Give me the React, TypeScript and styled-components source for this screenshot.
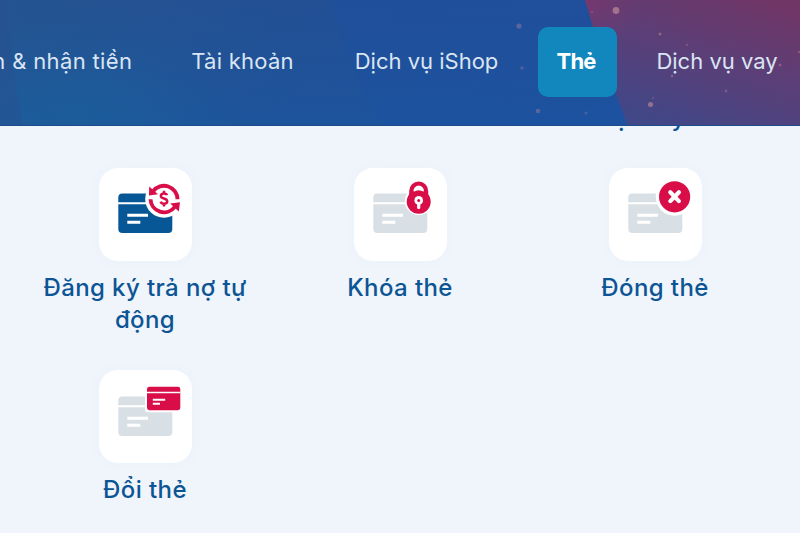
import styled, {createGlobalStyle} from 'styled-components'

const GlobalStyle = createGlobalStyle`
    * {
        box-sizing: border-box;
    }

    body {
        margin: 0;
        background-color: #f0f4fb;
        font-family: Inter, "Open Sans", sans-serif;
        overflow: hidden;
    }
`

const Page = styled.div`
    width: 800px;
    height: 533px;
    overflow: hidden;
    display: flex;
    flex-direction: column;
`

const Header = styled.header`
    position: relative;
    z-index: 1;
    flex: none;
    height: 126px;
    padding-top: 27px;
    overflow: hidden;
    border-bottom: 1px solid #1d4b89;
    background-color: #20529a;
`

const Backdrop = styled.svg`
    position: absolute;
    top: 0;
    left: 0;
    width: 800px;
    height: 126px;
`

const Tabs = styled.nav`
    position: relative;
    display: flex;
    justify-content: flex-end;
    gap: 20px;
    width: 797px;
`

interface TabProps {
    $width: number;
    $spacing?: number;
    $active?: boolean;
}

const Tab = styled.a<TabProps>`
    flex: none;
    display: flex;
    align-items: center;
    justify-content: center;
    width: ${props => props.$width}px;
    height: 70px;
    padding-bottom: 2px;
    padding-right: ${props => props.$active ? 3 : 0}px;
    border-radius: 10px;
    font-size: 22px;
    font-weight: ${props => props.$active ? 700 : 400};
    letter-spacing: ${props => props.$spacing || 0}px;
    white-space: nowrap;
    color: ${props => props.$active ? '#ffffff' : '#dbe5f3'};
    background-color: ${props => props.$active ? '#1287be' : 'transparent'};
`

const Content = styled.main`
    display: flex;
    flex-direction: column;
    gap: 34px;
    margin-top: -24px;
    padding: 0 17px;
`

const Row = styled.section`
    display: grid;
    grid-template-columns: repeat(3, 255px);
    justify-content: center;
`

const Item = styled.div`
    display: flex;
    flex-direction: column;
    align-items: center;
    gap: 11px;
`

const LastItem = styled(Item)`
    grid-column: 3;
`

const Tile = styled.div`
    width: 93px;
    height: 93px;
    border-radius: 19px;
    background-color: #ffffff;
    box-shadow: 0 0 8px rgba(232, 243, 253, 0.6);

    svg {
        display: block;
    }
`

const Label = styled.p<{ $spacing?: number }>`
    margin: 0;
    max-width: 220px;
    font-size: 24px;
    font-weight: 500;
    line-height: 32px;
    letter-spacing: ${props => props.$spacing ?? 0.4}px;
    text-align: center;
    color: #0c5595;
`

const RED = '#d90d48'
const BLUE = '#075796'
const GREY = '#d8e0e6'

const specks = [
    {x: 616, y: 10.5, r: 3.4, o: 0.65},
    {x: 519, y: 26, r: 2.6, o: 0.35},
    {x: 660, y: 34, r: 1.5, o: 0.45},
    {x: 687, y: 45, r: 1.3, o: 0.25},
    {x: 592, y: 12, r: 1.3, o: 0.2},
    {x: 522, y: 68, r: 1.8, o: 0.28},
    {x: 780, y: 65, r: 1.5, o: 0.4},
    {x: 672, y: 76, r: 1.3, o: 0.45},
    {x: 726, y: 91, r: 1.4, o: 0.35},
    {x: 650.5, y: 104.5, r: 2.5, o: 0.6},
    {x: 653, y: 98, r: 1.2, o: 0.25},
    {x: 538, y: 111, r: 2.3, o: 0.35},
    {x: 586, y: 113, r: 1.5, o: 0.25},
    {x: 799, y: 52, r: 1.2, o: 0.4},
]

function HeaderArt() {
    return (
        <Backdrop viewBox="0 0 800 126">
            <defs>
                <linearGradient id="base" x1="0" y1="0" x2="1" y2="0">
                    <stop offset="0" stopColor="#235792"/>
                    <stop offset="0.35" stopColor="#205197"/>
                    <stop offset="0.75" stopColor="#1f509c"/>
                </linearGradient>
                <linearGradient id="glow" x1="0" y1="0" x2="0" y2="1">
                    <stop offset="0" stopColor="#2a4c8e" stopOpacity="0.3"/>
                    <stop offset="1" stopColor="#1759a2" stopOpacity="0.4"/>
                </linearGradient>
                <radialGradient id="teal">
                    <stop offset="0" stopColor="#1a629e" stopOpacity="0.5"/>
                    <stop offset="1" stopColor="#1a629e" stopOpacity="0"/>
                </radialGradient>
                <linearGradient id="purple" gradientUnits="userSpaceOnUse" x1="740" y1="-10" x2="690" y2="135">
                    <stop offset="0" stopColor="#703666"/>
                    <stop offset="0.5" stopColor="#5a3f78"/>
                    <stop offset="1" stopColor="#414787"/>
                </linearGradient>
                <radialGradient id="pink" gradientUnits="userSpaceOnUse" cx="585" cy="0" r="55">
                    <stop offset="0" stopColor="#8c3469" stopOpacity="0.5"/>
                    <stop offset="1" stopColor="#8c3469" stopOpacity="0"/>
                </radialGradient>
            </defs>
            <rect width="800" height="126" fill="url(#base)"/>
            <rect width="800" height="126" fill="url(#glow)"/>
            <ellipse cx="80" cy="120" rx="160" ry="100" fill="url(#teal)"/>
            <path d="M0 0H6Q12 70 22 126H0Z" fill="#2a5090" opacity="0.45"/>
            <path d="M330 0H585L628 126H382Q350 70 330 0Z" fill="#1d50a4" opacity="0.35"/>
            <path d="M585 0H800V126H628Q602 60 585 0Z" fill="url(#purple)"/>
            <path d="M585 0H800V126H628Q602 60 585 0Z" fill="url(#pink)"/>
            {specks.map(s => (
                <circle key={`${s.x}-${s.y}`} cx={s.x} cy={s.y} r={s.r} fill="#c58f9b" opacity={s.o}/>
            ))}
        </Backdrop>
    )
}

function CardShape({color}: { color: string }) {
    return (
        <g>
            <rect x="19.3" y="25.5" width="54" height="39.6" rx="4" fill={color}/>
            <path d="M19 35.3H74" stroke="#fff" strokeWidth="2"/>
            <path d="M28.3 47.3H49M28.3 54.2H41.3" stroke="#fff" strokeWidth="3"/>
        </g>
    )
}

function AutoPayIcon() {
    return (
        <svg width="93" height="93" viewBox="0 0 93 93">
            <CardShape color={BLUE}/>
            <circle cx="65" cy="31" r="18.8" fill="#fff"/>
            <g fill="none" stroke={RED} strokeWidth="3.9">
                <path d="M54.2 23.2A13.5 13.5 0 0 1 78.5 31.3"/>
                <path d="M75.8 38.8A13.5 13.5 0 0 1 51.5 31.2"/>
            </g>
            <path d="M50.2 18.4L50 27.4L59 26.2Z" fill={RED}/>
            <path d="M79.8 43.6L81 34.2L71.2 35.6Z" fill={RED}/>
            <path
                d="M68 27.2C67.6 25.9 66.4 25.4 65 25.4C63.1 25.4 61.9 26.4 61.9 27.9C61.9 31.2 68.2 29.7 68.2 33.2C68.2 34.8 66.9 35.7 65 35.7C63.4 35.7 62.1 35 61.7 33.6M65 22.8V25.4M65 35.7V38.6"
                fill="none" stroke={RED} strokeWidth="2.5"/>
        </svg>
    )
}

function LockIcon() {
    return (
        <svg width="93" height="93" viewBox="0 0 93 93">
            <CardShape color={GREY}/>
            <circle cx="64.7" cy="33.3" r="13.8" fill="#fff"/>
            <circle cx="64.7" cy="22.9" r="10.8" fill="#fff"/>
            <path d="M57.3 28V22.9A7.4 7.4 0 0 1 72.1 22.9V28" fill="none" stroke={RED} strokeWidth="4.2"/>
            <circle cx="64.7" cy="33.8" r="12" fill={RED}/>
            <path d="M59.7 23.8A5.1 5.1 0 0 1 69.7 23.8Q64.7 20.8 59.7 23.8Z" fill="#fff"/>
            <circle cx="64.7" cy="32.4" r="4.3" fill="#fff"/>
            <path d="M64.7 34V39.4" stroke="#fff" strokeWidth="3.2" strokeLinecap="round"/>
            <circle cx="64.7" cy="32.4" r="1.5" fill={RED}/>
        </svg>
    )
}

function CloseCardIcon() {
    return (
        <svg width="93" height="93" viewBox="0 0 93 93">
            <CardShape color={GREY}/>
            <circle cx="65.6" cy="28.8" r="18.9" fill="#fff"/>
            <circle cx="65.6" cy="28.8" r="15.6" fill={RED}/>
            <path d="M61.3 24.3L69.9 33.1M69.9 24.3L61.3 33.1" stroke="#fff" strokeWidth="4.2" strokeLinecap="round"/>
        </svg>
    )
}

function SwapCardIcon() {
    return (
        <svg width="93" height="93" viewBox="0 0 93 93">
            <g transform="translate(0 1)">
                <CardShape color={GREY}/>
            </g>
            <rect x="46" y="14.6" width="37.4" height="27.6" rx="3" fill="#fff"/>
            <rect x="48" y="16.8" width="33.3" height="23.4" rx="2.4" fill={RED}/>
            <path d="M48 22.5H81.4" stroke="#fff" strokeWidth="1.3"/>
            <path d="M53.8 29.8H66.2M53.8 33.7H61" stroke="#fff" strokeWidth="2"/>
        </svg>
    )
}

function App() {
    return (
        <>
            <GlobalStyle/>
            <Page>
                <Header>
                    <HeaderArt/>
                    <Tabs>
                        <Tab $width={244} $spacing={0.35}>Chuyển &amp; nhận tiền</Tab>
                        <Tab $width={145} $spacing={0.25}>Tài khoản</Tab>
                        <Tab $width={183}>Dịch vụ iShop</Tab>
                        <Tab $width={79} $spacing={-0.9} $active={true}>Thẻ</Tab>
                        <Tab $width={160}>Dịch vụ vay</Tab>
                    </Tabs>
                </Header>
                <Content>
                    <Row>
                        <LastItem>
                            <Label $spacing={-0.1}>trực tuyến</Label>
                        </LastItem>
                    </Row>
                    <Row>
                        <Item>
                            <Tile><AutoPayIcon/></Tile>
                            <Label>Đăng ký trả nợ tự động</Label>
                        </Item>
                        <Item>
                            <Tile><LockIcon/></Tile>
                            <Label>Khóa thẻ</Label>
                        </Item>
                        <Item>
                            <Tile><CloseCardIcon/></Tile>
                            <Label>Đóng thẻ</Label>
                        </Item>
                    </Row>
                    <Row>
                        <Item>
                            <Tile><SwapCardIcon/></Tile>
                            <Label>Đổi thẻ</Label>
                        </Item>
                    </Row>
                </Content>
            </Page>
        </>
    )
}

export default App
